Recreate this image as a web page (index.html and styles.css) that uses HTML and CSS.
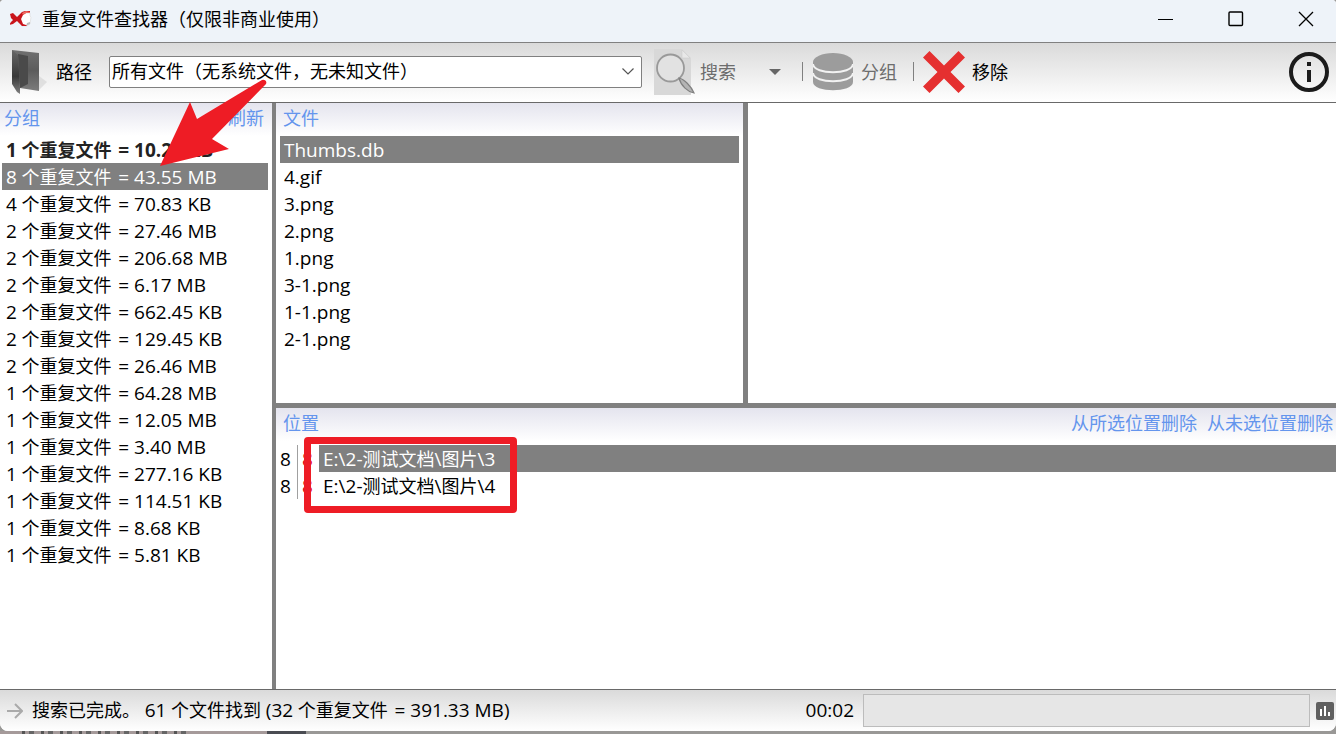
FILE: index.html
```
<!DOCTYPE html>
<html lang="zh-CN">
<head>
    <meta charset="UTF-8">
    <meta name="viewport" content="width=device-width, initial-scale=1.0">
    <title>重复文件查找器</title>
    <link rel="stylesheet" href="styles.css">
</head>
<body>
    <div class="window">
        <header class="titlebar">
            <svg class="app-logo" width="22" height="18" viewBox="0 0 22 18">
                <path d="M12 5l2-2h6v3l1 1-1 7-3 2h-5l-2-4z" fill="#fff" stroke="#d8d8d8" stroke-width="0.6"/>
                <path d="M16 16l4-2v-2l-3 1z" fill="#bbb"/>
                <path d="M0 4l3-1 4 4 5-5 3-1h5v2h-4l-3 2-2 4 2 5 3 1 1 1-5 0-5-5-4 3-4 1 2-3 2-2-2-2z" fill="#c9141b"/>
                <path d="M12 3l4-2 4 1v1h-4l-3 2z" fill="#ef6a62"/>
            </svg>
            <h1>重复文件查找器（仅限非商业使用）</h1>
            <div class="window-buttons">
                <button aria-label="最小化"><svg width="16" height="16" viewBox="0 0 16 16"><path d="M0 8.5h15" stroke="#000"/></svg></button>
                <button aria-label="最大化"><svg width="16" height="16" viewBox="0 0 16 16"><rect x="1" y="1" width="13.5" height="13.5" rx="1" fill="none" stroke="#000" stroke-width="1.4"/></svg></button>
                <button aria-label="关闭"><svg width="16" height="16" viewBox="0 0 16 16"><path d="M1 1l14 14M15 1L1 15" stroke="#000" stroke-width="1.3"/></svg></button>
            </div>
        </header>

        <div class="toolbar">
            <button class="tool path-btn">
                <svg width="38" height="48" viewBox="0 0 38 48">
                    <defs>
                        <linearGradient id="folderFront" x1="0" y1="0" x2="0" y2="1">
                            <stop offset="0" stop-color="#707070"/>
                            <stop offset="0.5" stop-color="#5c5c5c"/>
                            <stop offset="1" stop-color="#7c7c7c"/>
                        </linearGradient>
                        <linearGradient id="folderSide" x1="0" y1="0" x2="0" y2="1">
                            <stop offset="0" stop-color="#666"/>
                            <stop offset="0.6" stop-color="#383838"/>
                            <stop offset="1" stop-color="#808080"/>
                        </linearGradient>
                    </defs>
                    <path d="M30 42l8-8-8-6z" fill="#ccc" opacity="0.5"/>
                    <path d="M3 2l27 3v38l-19-3z" fill="url(#folderFront)"/>
                    <path d="M9 6l10 2v28l-8 4z" fill="#4a4a4a"/>
                    <path d="M3 2l6 5 2 33v6l-3-2-5-8z" fill="url(#folderSide)"/>
                </svg>
                <span>路径</span>
            </button>
            <select class="file-filter" aria-label="文件类型">
                <option>所有文件（无系统文件，无未知文件）</option>
            </select>
            <button class="tool search-btn" disabled>
                <svg width="42" height="46" viewBox="0 0 42 46">
                    <path d="M0 0h28l9 9v37H0z" fill="#d8d8d8"/>
                    <path d="M28 1v8h8z" fill="#e8e8e8" stroke="#ccc" stroke-width="0.6"/>
                    <circle cx="16.5" cy="19" r="13.5" fill="#e2e2e2" stroke="#999" stroke-width="1.8"/>
                    <path d="M25 29c5 1 12 8 15 15-6-1-13-7-15-15z" fill="#b4b4b4" stroke="#808080" stroke-width="1.2"/>
                </svg>
                <span>搜索</span>
            </button>
            <button class="drop-btn" aria-label="搜索选项" disabled><svg width="12" height="6" viewBox="0 0 12 6"><path d="M0 0h12L6 6z" fill="#666"/></svg></button>
            <div class="divider"></div>
            <button class="tool group-btn" disabled>
                <svg width="40" height="38" viewBox="0 0 40 38">
                    <path d="M0 9v20c0 11 40 11 40 0V9z" fill="#9c9c9c"/>
                    <ellipse cx="20" cy="9" rx="20" ry="9" fill="#9c9c9c"/>
                    <path d="M0 11c1 11 39 11 40 0M0 20c1 11 39 11 40 0" fill="none" stroke="#f2f2f2" stroke-width="2"/>
                </svg>
                <span>分组</span>
            </button>
            <div class="divider"></div>
            <button class="tool remove-btn">
                <svg width="42" height="42" viewBox="0 0 42 42"><path d="M6.500 0L21 14.500 35.500 0 42 6.500 27.500 21 42 35.500 35.500 42 21 27.500 6.500 42 0 35.500 14.500 21 0 6.500z" fill="#e53030"/></svg>
                <span>移除</span>
            </button>
            <button class="info-btn" aria-label="关于">
                <svg width="40" height="40" viewBox="0 0 40 40"><circle cx="20" cy="20" r="18" fill="none" stroke="#1b1b1b" stroke-width="4"/><path d="M18 10h4v4h-4zM18 18h4v12h-4z" fill="#1b1b1b"/></svg>
            </button>
        </div>

        <main class="content">
            <section class="groups">
                <div class="panel-head">
                    <h2>分组</h2>
                    <a href="#">刷新</a>
                </div>
                <ul class="list">
                    <li class="current"><span>1</span> 个重复文件 <span class="size">= 10.22 KB</span></li>
                    <li class="selected"><span>8</span> 个重复文件 <span class="size">= 43.55 MB</span></li>
                    <li><span>4</span> 个重复文件 <span class="size">= 70.83 KB</span></li>
                    <li><span>2</span> 个重复文件 <span class="size">= 27.46 MB</span></li>
                    <li><span>2</span> 个重复文件 <span class="size">= 206.68 MB</span></li>
                    <li><span>2</span> 个重复文件 <span class="size">= 6.17 MB</span></li>
                    <li><span>2</span> 个重复文件 <span class="size">= 662.45 KB</span></li>
                    <li><span>2</span> 个重复文件 <span class="size">= 129.45 KB</span></li>
                    <li><span>2</span> 个重复文件 <span class="size">= 26.46 MB</span></li>
                    <li><span>1</span> 个重复文件 <span class="size">= 64.28 MB</span></li>
                    <li><span>1</span> 个重复文件 <span class="size">= 12.05 MB</span></li>
                    <li><span>1</span> 个重复文件 <span class="size">= 3.40 MB</span></li>
                    <li><span>1</span> 个重复文件 <span class="size">= 277.16 KB</span></li>
                    <li><span>1</span> 个重复文件 <span class="size">= 114.51 KB</span></li>
                    <li><span>1</span> 个重复文件 <span class="size">= 8.68 KB</span></li>
                    <li><span>1</span> 个重复文件 <span class="size">= 5.81 KB</span></li>
                </ul>
            </section>

            <div class="details">
                <div class="upper">
                    <section class="files">
                        <div class="panel-head">
                            <h2>文件</h2>
                        </div>
                        <ul class="list">
                            <li class="selected"><span>Thumbs.db</span></li>
                            <li><span>4.gif</span></li>
                            <li><span>3.png</span></li>
                            <li><span>2.png</span></li>
                            <li><span>1.png</span></li>
                            <li><span>3-1.png</span></li>
                            <li><span>1-1.png</span></li>
                            <li><span>2-1.png</span></li>
                        </ul>
                    </section>
                    <section class="preview"></section>
                </div>

                <section class="locations">
                    <div class="panel-head">
                        <h2>位置</h2>
                        <div class="links">
                            <a href="#">从所选位置删除</a>
                            <a href="#">从未选位置删除</a>
                        </div>
                    </div>
                    <table class="location-table">
                        <tr class="selected">
                            <td class="total"><span>8</span></td>
                            <td class="dupes"><span>8</span></td>
                            <td class="path"><span>E:\2-</span>测试文档<span>\</span>图片<span>\3</span></td>
                        </tr>
                        <tr>
                            <td class="total"><span>8</span></td>
                            <td class="dupes"><span>8</span></td>
                            <td class="path"><span>E:\2-</span>测试文档<span>\</span>图片<span>\4</span></td>
                        </tr>
                    </table>
                    <div class="mark-box"></div>
                </section>
            </div>
        </main>

        <footer class="statusbar">
            <svg class="status-arrow" width="16" height="16" viewBox="0 0 16 16"><path d="M0 8h14M8 1l7 7-7 7" fill="none" stroke="#aaa" stroke-width="2"/></svg>
            <p class="status-text">搜索已完成。 <span>61</span> 个文件找到 <span>(32</span> 个重复文件 <span class="size">= 391.33 MB)</span></p>
            <span class="elapsed">00:02</span>
            <div class="progress" role="progressbar" aria-label="进度"></div>
            <button class="stats-btn" aria-label="统计"><svg width="18" height="18" viewBox="0 0 18 18"><rect width="18" height="18" rx="2" fill="#606060"/><path d="M4 7h2v7H4zM8 4h2v10H8zM12 10h2v4h-2z" fill="#fff"/></svg></button>
        </footer>

        <svg class="mark-arrow" width="110" height="90" viewBox="0 0 110 90"><path d="M0 88L30 24 37 41 102 2a3 3 0 0 1 4 4L52 61 69 71z" fill="#ee1c25"/></svg>
    </div>
    <div class="desktop"></div>
</body>
</html>
```
FILE: styles.css
```
* { box-sizing: border-box; }
html, body { height: 100%; }
body { margin: 0; display: flex; flex-direction: column; background: #999896; color: #000; font-family: "Open Sans", "Noto Sans CJK SC", sans-serif; font-size: 18px; line-height: 27px; overflow: hidden; }
h1, h2, p, ul { margin: 0; padding: 0; font-size: 18px; font-weight: normal; }
button { display: flex; align-items: center; margin: 0; padding: 0; border: none; background: none; color: #000; font: inherit; }
button:disabled { color: #6d6d6d; }
a { color: #6495ed; text-decoration: none; }
svg { display: block; flex: none; }

.window { position: relative; flex: 1; min-height: 0; display: flex; flex-direction: column; background: #fff; border-radius: 4px 4px 8px 8px; overflow: hidden; }

.titlebar { display: flex; align-items: center; height: 43px; padding: 0 0 4px 10px; gap: 10px; background: #eef3f9; border-bottom: 1px solid #808080; }
.titlebar h1 { flex: 1; }
.window-buttons { display: flex; gap: 10px; }
.window-buttons button { width: 60px; height: 38px; justify-content: center; }

.toolbar { display: flex; align-items: center; height: 60px; padding: 0 7px 2px 9px; background: linear-gradient(#dadada, #fff); border-bottom: 1px solid #696969; }
.tool span { padding-top: 2px; }
.path-btn { gap: 9px; }
.file-filter {
    width: 533px;
    height: 32px;
    margin: 0 12px 0 17px;
    padding: 0 2px;
    appearance: none;
    border: 1px solid #808080;
    border-radius: 2px;
    background: #fff url("data:image/svg+xml,%3Csvg xmlns='http://www.w3.org/2000/svg' width='12' height='7'%3E%3Cpath d='M.5.5L6 6 11.500.5' fill='none' stroke='%23555' stroke-width='1.200'/%3E%3C/svg%3E") no-repeat right 7px center;
    color: #000;
    font: inherit;
}
.search-btn { gap: 4px; }
.drop-btn { margin: 0 21px 0 33px; }
.divider { width: 1px; height: 19px; background: #808080; }
.group-btn { gap: 8px; margin: 0 16px 0 10px; }
.remove-btn { gap: 7px; margin-left: 9px; }
.info-btn { margin-left: auto; }

.content { flex: 1; min-height: 0; display: flex; border-bottom: 1px solid #696969; }
.groups { width: 276px; flex: none; border-right: 4px solid #808080; }
.details { flex: 1; min-width: 0; display: flex; flex-direction: column; }
.upper { display: flex; height: 305px; border-bottom: 5px solid #808080; }
.files { width: 472px; flex: none; border-right: 5px solid #808080; }
.preview { flex: 1; }
.locations { position: relative; flex: 1; }

.panel-head { display: flex; justify-content: space-between; height: 33px; padding: 2px 8px 0 4px; background: linear-gradient(#e4e4ee, #fff); color: #6495ed; }
.details .panel-head { padding: 2px 3px 0 7px; }
.links { display: flex; gap: 10px; }

.list { list-style: none; }
.list li { height: 27px; padding: 1px 4px 0; white-space: nowrap; }
.list span, .location-table span, .statusbar span { font-size: 19px; }
.list .size, .statusbar .size { margin-left: 2px; }
.groups .list { padding: 0 4px 0 2px; }
.files .list { padding: 0 4px; }
.list .selected { background: #808080; color: #fff; }
.list .current { font-weight: bold; color: #222; }

.location-table { width: 100%; margin-top: 4px; border-collapse: separate; border-spacing: 0; line-height: 26px; }
.location-table td { height: 27px; padding: 1px 0 0 4px; }
.location-table .total { width: 22px; border-right: 1px solid #a0a0a0; }
.location-table .dupes { width: 21px; color: #e00020; }
.location-table .selected .path { background: #808080; color: #fff; }

.statusbar { display: flex; align-items: center; height: 41px; padding: 0 2px 0 7px; background: linear-gradient(#dadada, #fff); }
.status-text { flex: 1; margin-left: 9px; }
.progress { width: 447px; height: 33px; margin: 0 6px 0 9px; border: 1px solid #bcbcbc; background: #e6e6e6; }

/* red marker notes over the window */
.mark-arrow { position: absolute; left: 160px; top: 78px; }
.mark-box { position: absolute; left: 28px; top: 29px; width: 213px; height: 76px; border: 7px solid #ee1c25; border-radius: 4px; }

/* strip of the desktop below the window */
.desktop {
    height: 3px;
    background:
        repeating-linear-gradient(90deg, #555 0 3px, transparent 3px 7px, #666 7px 12px, transparent 12px 19px) 22px 0 / 164px 3px no-repeat,
        linear-gradient(90deg, #a59a9a 267px, #4a4c52 267px, #4a4c52 306px, #999896 306px);
}
```
